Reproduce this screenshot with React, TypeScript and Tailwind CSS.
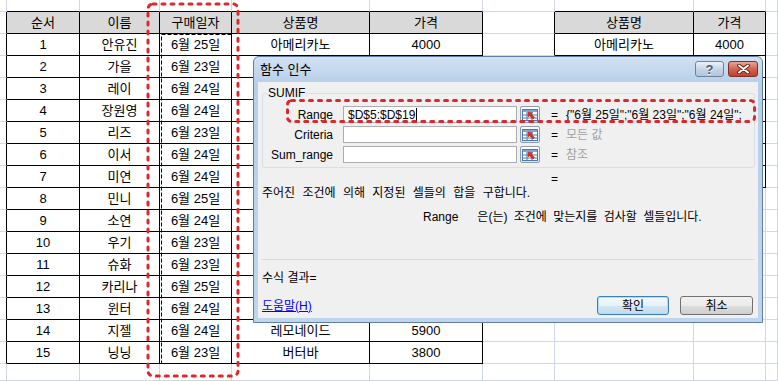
import type { ReactNode } from 'react';

// column widths and row heights of the visible sheet area
const COLS = [7, 73, 80, 72, 138, 113, 72, 139, 72, 12];
const ROW_COUNT = 18;

type Row = [string, string, string, string, string];

const members: Row[] = [
  ['1', '안유진', '6월 25일', '아메리카노', '4000'],
  ['2', '가을', '6월 23일', '', ''],
  ['3', '레이', '6월 24일', '', ''],
  ['4', '장원영', '6월 24일', '', ''],
  ['5', '리즈', '6월 23일', '', ''],
  ['6', '이서', '6월 24일', '', ''],
  ['7', '미연', '6월 24일', '', ''],
  ['8', '민니', '6월 25일', '', ''],
  ['9', '소연', '6월 24일', '', ''],
  ['10', '우기', '6월 23일', '', ''],
  ['11', '슈화', '6월 23일', '', ''],
  ['12', '카리나', '6월 25일', '', ''],
  ['13', '윈터', '6월 24일', '', ''],
  ['14', '지젤', '6월 24일', '레모네이드', '5900'],
  ['15', '닝닝', '6월 23일', '버터바', '3800'],
];

const inOrders = (r: number, c: number) => r >= 1 && r <= 16 && c >= 1 && c <= 5;
const inPrices = (r: number, c: number) => r >= 1 && r <= 8 && c >= 7 && c <= 8;
const inTable = (r: number, c: number) => inOrders(r, c) || inPrices(r, c);

function cellText(r: number, c: number): string {
  if (r === 1) {
    if (inOrders(r, c)) return ['순서', '이름', '구매일자', '상품명', '가격'][c - 1];
    if (inPrices(r, c)) return ['상품명', '가격'][c - 7];
  }
  if (inOrders(r, c)) return members[r - 2][c - 1];
  if (r === 2 && c === 7) return '아메리카노';
  if (r === 2 && c === 8) return '4000';
  return '';
}

function Sheet() {
  const cells: ReactNode[] = [];
  for (let r = 0; r < ROW_COUNT; r++) {
    for (let c = 0; c < COLS.length; c++) {
      const right = inTable(r, c) || inTable(r, c + 1) ? 'border-r-black' : 'border-r-[#d0d7e5]';
      const bottom = inTable(r, c) || inTable(r + 1, c) ? 'border-b-black' : 'border-b-[#d0d7e5]';
      const header = r === 1 && inTable(r, c) ? 'bg-[#d9d9d9]' : 'bg-white';
      cells.push(
        <div
          key={`${r}-${c}`}
          className={`flex items-center justify-center overflow-hidden whitespace-nowrap border-r border-b text-[13px] text-black ${right} ${bottom} ${header}`}
        >
          {cellText(r, c)}
        </div>
      );
    }
  }
  return (
    <div className="grid grid-cols-[7px_73px_80px_72px_138px_113px_72px_139px_72px_12px] grid-rows-[12px_repeat(16,22px)_17px]">
      {cells}
    </div>
  );
}

function RefButton() {
  return (
    <div className="ml-[3px] flex h-[17px] w-[20px] items-center justify-center rounded-[2px] border border-[#8e9bab] bg-[linear-gradient(to_bottom,#ffffff,#dce5ef)]">
      <svg width="16" height="12" viewBox="0 0 16 12">
        <rect x="0.5" y="0.5" width="15" height="11" fill="#fff" stroke="#4a79b0" />
        <rect x="1" y="1" width="14" height="2" fill="#7fa6d6" />
        <path d="M1 6h14M1 9h14M5 3v8M10 3v8" stroke="#4a79b0" strokeWidth="1" />
        <path d="M6 3l4.5 0.8-1.3 1.3 3.3 3.3-1.6 1.6-3.3-3.3-1.3 1.3z" fill="#e0301e" stroke="#9b1c10" strokeWidth="0.5" />
      </svg>
    </div>
  );
}

function ArgRow({ label, value, muted, children }: { label: string; value: string; muted?: boolean; children?: ReactNode }) {
  return (
    <div className="flex h-[17px] items-center">
      <div className="w-[70px] text-right">{label}</div>
      <div className="ml-[10px] flex h-[17px] w-[174px] items-center border border-[#abadb3] bg-white pl-[4px]">
        {children}
      </div>
      <RefButton />
      <div className="ml-[11px]">=</div>
      <div className={`ml-[8px] whitespace-nowrap ${muted ? 'text-[#a0a0a0]' : 'text-black'}`}>{value}</div>
    </div>
  );
}

function FunctionArgsDialog() {
  return (
    <div className="absolute left-[253px] top-[56px] flex h-[267px] w-[510px] flex-col rounded-t-[6px] border border-[#5f7ea3] bg-[linear-gradient(to_bottom,#d2e1f2,#b8cfe9_26px,#bfd5ec)] px-[4px] pb-[4px] text-[12px] text-black">
      <div className="flex h-[25px] items-center justify-between">
        <span className="pl-[2px] pt-[1px] text-[13px]">함수 인수</span>
        <div className="flex items-center gap-[4px] pb-[1px]">
          <div className="flex h-[16px] w-[29px] items-center justify-center rounded-[3px] border border-[#6f829d] bg-[linear-gradient(to_bottom,#eef3f9,#c5d4e6_50%,#b3c6dd)]">
            <span className="text-[13px] font-bold leading-none text-[#4d5a6b] [text-shadow:0_1px_0_#fff]">?</span>
          </div>
          <div className="flex h-[16px] w-[30px] items-center justify-center rounded-[3px] border border-[#7e2f26] bg-[linear-gradient(to_bottom,#e9a597,#d06452_50%,#c2402f)]">
            <svg width="13" height="10" viewBox="0 0 13 10">
              <path d="M2 1.5l9 7M11 1.5l-9 7" stroke="#5b1a12" strokeWidth="3.6" strokeLinecap="round" />
              <path d="M2 1.5l9 7M11 1.5l-9 7" stroke="#fff" strokeWidth="2" strokeLinecap="round" />
            </svg>
          </div>
        </div>
      </div>

      <div className="flex flex-1 flex-col bg-[#f0f0f0] pl-[4px] pr-[5px]">
        <div className="relative mt-[11px] flex h-[75px] w-[493px] flex-col gap-[3px] rounded-[3px] border border-[#d5dfe5] pt-[12px]">
          <span className="absolute -top-[8px] left-[4px] bg-[#f0f0f0] px-[1px] leading-[14px]">SUMIF</span>
          <ArgRow label="Range" value={'{"6월 25일";"6월 23일";"6월 24일";'}>
            <span>$D$5:$D$19</span>
            <span className="ml-px h-[13px] border-l border-black" />
          </ArgRow>
          <ArgRow label="Criteria" value="모든 값" muted />
          <ArgRow label="Sum_range" value="참조" muted />
        </div>

        <div className="mt-[4px] h-[14px] pl-[289px] leading-[14px]">=</div>
        <div className="h-[14px] leading-[14px] [word-spacing:4px]">주어진 조건에 의해 지정된 셀들의 합을 구합니다.</div>
        <div className="mt-[10px] h-[14px] pl-[161px] leading-[14px] [word-spacing:3px]">
          Range&nbsp;&nbsp; 은(는) 조건에 맞는지를 검사할 셀들입니다.
        </div>

        <div className="mt-[35px] h-px w-[492px] bg-[#ccd9e6]" />
        <div className="mt-[11px] h-[14px] leading-[14px]">수식 결과=</div>

        <div className="mt-[11px] flex h-[19px] items-center">
          <span className="text-[#0000ff] underline">도움말(H)</span>
          <div className="ml-auto flex gap-[11px]">
            <div className="flex h-[19px] w-[72px] items-center justify-center rounded-[3px] border border-[#3c7fb1] bg-[linear-gradient(to_bottom,#f4f9fc,#e6f1f9_50%,#d4e6f3_51%,#c2dbee)] shadow-[inset_0_0_0_1px_#a8e0f8]">
              확인
            </div>
            <div className="flex h-[19px] w-[73px] items-center justify-center rounded-[3px] border border-[#707070] bg-[linear-gradient(to_bottom,#f2f2f2,#ebebeb_50%,#dddddd_51%,#cfcfcf)]">
              취소
            </div>
          </div>
        </div>
      </div>
    </div>
  );
}

function Annotations() {
  return (
    <svg className="pointer-events-none absolute left-0 top-0" width="778" height="381" viewBox="0 0 778 381">
      <rect x="161.5" y="34.5" width="70" height="329" fill="none" stroke="#000" strokeWidth="1" strokeDasharray="4 2" />
      <rect
        x="148"
        y="4"
        width="90"
        height="372"
        rx="5"
        fill="none"
        stroke="#e0262d"
        strokeWidth="3"
        strokeDasharray="3 6"
        strokeLinecap="round"
      />
      <rect
        x="287.5"
        y="100.5"
        width="467"
        height="21"
        rx="4"
        fill="none"
        stroke="#e0262d"
        strokeWidth="3"
        strokeDasharray="3 6"
        strokeLinecap="round"
      />
    </svg>
  );
}

export default function App() {
  return (
    <div className="relative h-[381px] w-[778px] overflow-hidden bg-white font-['Liberation_Sans','Noto_Sans_CJK_KR',sans-serif]">
      <Sheet />
      <FunctionArgsDialog />
      <Annotations />
    </div>
  );
}
